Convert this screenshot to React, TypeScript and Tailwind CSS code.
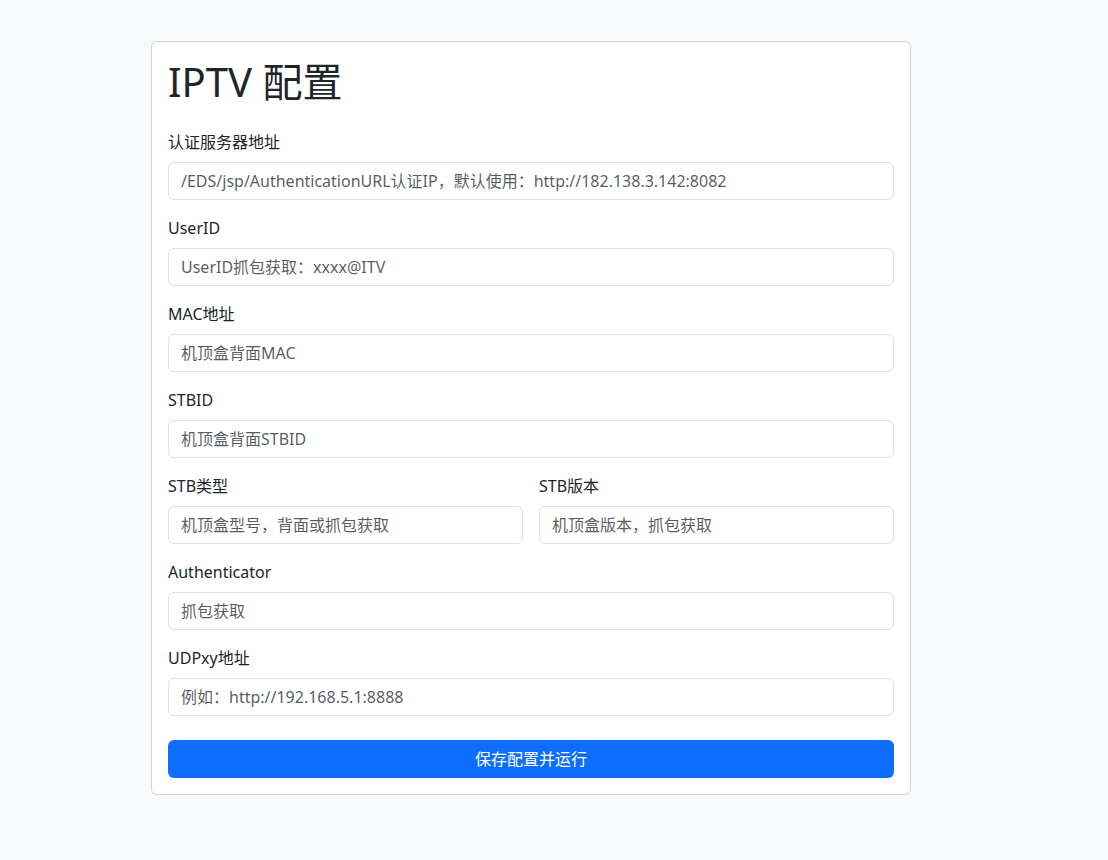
import React from "react";

const font = { fontFamily: '"Noto Sans", "Noto Sans CJK SC", sans-serif' };

function Field({ label, placeholder }: { label: string; placeholder: string }) {
  return (
    <div className="mb-4 flex-1">
      <label className="mb-2 block text-[16px] leading-6 text-[#212529]">{label}</label>
      <input
        className="block h-[38px] w-full rounded-[6px] border border-[#dee2e6] bg-white px-3 py-1.5 text-[16px] leading-6 text-[#212529] placeholder:text-[rgba(33,37,41,0.75)] outline-none"
        placeholder={placeholder}
      />
    </div>
  );
}

export default function App() {
  return (
    <div className="min-h-[860px] bg-[#f8f9fa] pt-[41px]" style={font}>
      <div className="ml-[151px] w-[760px] rounded-[6px] border border-[rgba(0,0,0,0.175)] bg-white p-4">
        <h1 className="mb-6 text-[40px] font-normal leading-[48px] text-[#212529]">IPTV 配置</h1>
        <Field label="认证服务器地址" placeholder="/EDS/jsp/AuthenticationURL认证IP，默认使用：http://182.138.3.142:8082" />
        <Field label="UserID" placeholder="UserID抓包获取：xxxx@ITV" />
        <Field label="MAC地址" placeholder="机顶盒背面MAC" />
        <Field label="STBID" placeholder="机顶盒背面STBID" />
        <div className="flex gap-4">
          <Field label="STB类型" placeholder="机顶盒型号，背面或抓包获取" />
          <Field label="STB版本" placeholder="机顶盒版本，抓包获取" />
        </div>
        <Field label="Authenticator" placeholder="抓包获取" />
        <Field label="UDPxy地址" placeholder="例如：http://192.168.5.1:8888" />
        <button className="mt-6 block h-[38px] w-full rounded-[6px] bg-[#0d6efd] text-[16px] leading-6 text-white">
          保存配置并运行
        </button>
      </div>
    </div>
  );
}
